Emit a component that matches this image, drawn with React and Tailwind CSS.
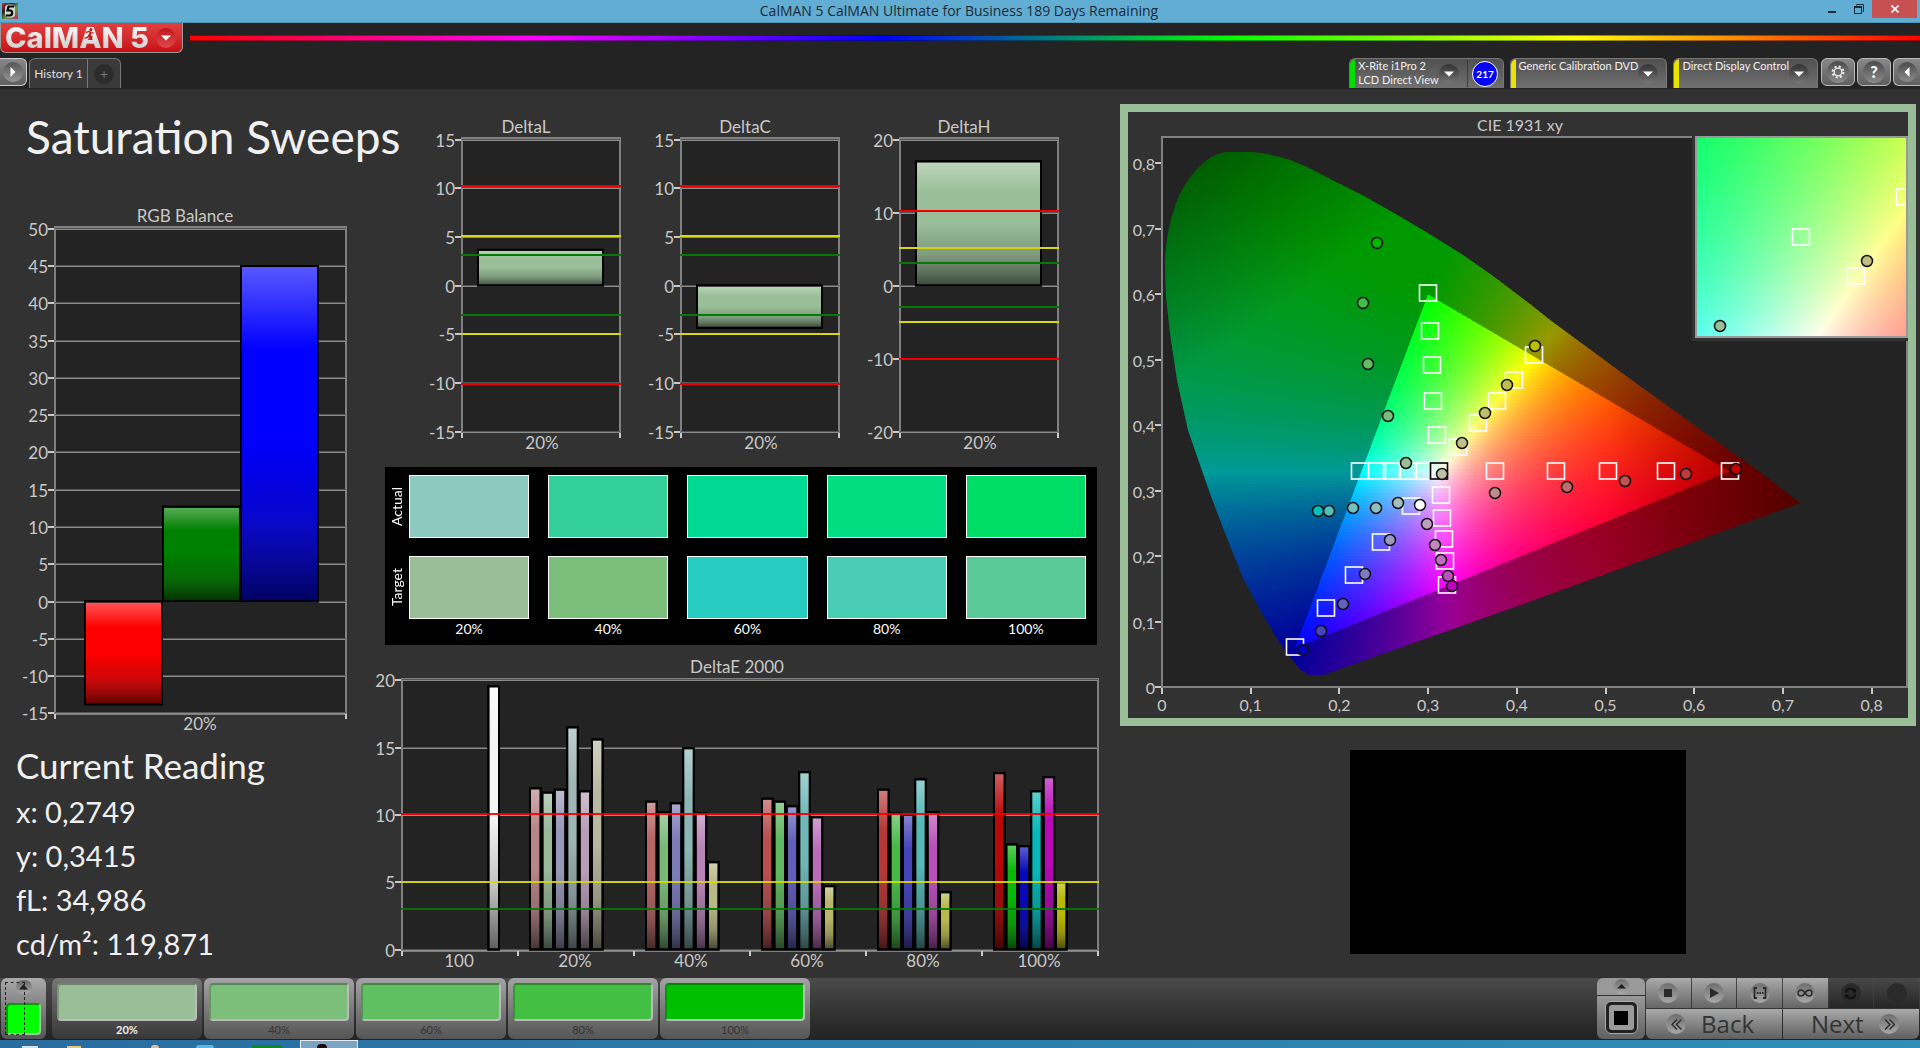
import { useState } from 'react';

// ---------- data ----------

const DELTA_CHARTS = [
  { title: 'DeltaL', max: 15, step: 5, value: 3.66 },
  { title: 'DeltaC', max: 15, step: 5, value: -4.35 },
  { title: 'DeltaH', max: 20, step: 10, value: 17 },
];

const LIMITS = [
  { value: 10, color: '#f00000' },
  { value: 5, color: '#d8d810' },
  { value: 3, color: '#067806' },
];

const DELTA_E = [
  { label: '100', bars: [null, null, null, null, null, null, [19.55, '#f4f4f4']] },
  {
    label: '20%',
    bars: [
      [11.97, '#b88686'],
      [11.65, '#98b898'],
      [11.87, '#9898b8'],
      [16.5, '#a0b6b6'],
      [11.75, '#b89eb6'],
      [15.6, '#b8b8a0'],
    ],
  },
  {
    label: '40%',
    bars: [
      [10.98, '#b86666'],
      [10.2, '#7ab87a'],
      [10.86, '#7c7cb8'],
      [14.95, '#8cb6b6'],
      [10.1, '#b884b8'],
      [6.48, '#b8b886'],
    ],
  },
  {
    label: '60%',
    bars: [
      [11.2, '#b85050'],
      [10.98, '#60b860'],
      [10.64, '#6060b8'],
      [13.17, '#70b8b8'],
      [9.82, '#b86cb8'],
      [4.7, '#b8b86c'],
    ],
  },
  {
    label: '80%',
    bars: [
      [11.87, '#b83838'],
      [10.1, '#46b846'],
      [10, '#4444b8'],
      [12.64, '#58b8b8'],
      [10.2, '#b850b8'],
      [4.25, '#b8b850'],
    ],
  },
  {
    label: '100%',
    bars: [
      [13.1, '#b80808'],
      [7.8, '#08b808'],
      [7.67, '#0808b8'],
      [11.75, '#08b8b8'],
      [12.8, '#b808b8'],
      [5, '#b8b808'],
    ],
  },
];

const SWATCHES = [
  { label: '20%', actual: 'bg-[#8ccac0]', target: 'bg-[#9abf98]' },
  { label: '40%', actual: 'bg-[#34d09c]', target: 'bg-[#7bbf7b]' },
  { label: '60%', actual: 'bg-[#00d992]', target: 'bg-[#28cbbf]' },
  { label: '80%', actual: 'bg-[#00de82]', target: 'bg-[#4acdb6]' },
  { label: '100%', actual: 'bg-[#00dd66]', target: 'bg-[#5acb98]' },
];

const READINGS = ['x: 0,2749', 'y: 0,3415', 'fL: 34,986', 'cd/m²: 119,871'];

const STEPS = [
  { label: '20%', color: 'bg-[#9abf98]' },
  { label: '40%', color: 'bg-[#7bbf7b]' },
  { label: '60%', color: 'bg-[#60bf60]' },
  { label: '80%', color: 'bg-[#43bf43]' },
  { label: '100%', color: 'bg-[#00bf00]' },
];

const TARGETS = [
  [1428, 293], [1430, 331], [1432, 365], [1433, 401], [1437, 435],
  [1534, 355], [1514, 380], [1497, 401], [1478, 423], [1458, 447],
  [1360, 471], [1377, 471], [1392, 471], [1408, 471], [1424, 471],
  [1495, 471], [1556, 471], [1608, 471], [1666, 471], [1730, 471],
  [1411, 506], [1381, 542], [1354, 575], [1326, 608], [1295, 647],
  [1441, 495], [1442, 518], [1444, 539], [1445, 561], [1447, 585],
];

const MEASURED = [
  [1377, 243, '#00b800'], [1363, 303, '#43bf43'], [1368, 364, '#60bf60'], [1388, 416, '#7bbf7b'], [1406, 463, '#9abf98'],
  [1535, 346, '#bfbf00'], [1507, 385, '#bfbf50'], [1485, 413, '#bfbf6c'], [1462, 443, '#bfbf86'], [1442, 474, '#bfbfa4'],
  [1495, 493, '#bf8a8a'], [1567, 487, '#bf6c6c'], [1625, 481, '#bf5252'], [1686, 474, '#bf3a3a'], [1736, 469, '#bf0000'],
  [1398, 503, '#a4bfbf'], [1376, 508, '#8cbfbf'], [1353, 508, '#74bfbf'], [1329, 511, '#52bfbf'], [1318, 511, '#00bfbf'],
  [1420, 505, '#ffffff'],
  [1390, 540, '#9a9abf'], [1365, 574, '#7c7cbf'], [1343, 604, '#6060bf'], [1321, 631, '#4444bf'], [1303, 650, '#0000bf'],
  [1427, 524, '#bfa0bf'], [1435, 545, '#bf86bf'], [1441, 560, '#bf6cbf'], [1448, 576, '#bf50bf'], [1452, 586, '#bf00bf'],
];

const LOCUS =
  'M1225 152 L1252 152 Q1272 154 1290 160 L1307 167 L1330 179 L1363 195.5 L1393 212.5 L1427 232.5 L1463 255 L1493 276 L1530 304 L1550 320 L1633 381 L1701 430 L1767 477.5 L1800 503 L1530 601.5 L1323 675 L1310 675 Q1304 673 1300 669 L1290 657 L1277 638.5 L1260 610 L1243 578 L1227 538 L1210 493.5 L1188 430 L1177 380 L1170 333 L1166 297 L1165 267 Q1165 240 1172 216 Q1179 190 1192 175 Q1208 155 1225 152 Z';

// ---------- charts ----------

function BarGradient({ id }) {
  return (
    <linearGradient id={id} x1="0" y1="0" x2="0" y2="1">
      <stop offset="0" stopColor="#fff" stopOpacity="0.35" />
      <stop offset="0.25" stopColor="#fff" stopOpacity="0" />
      <stop offset="0.5" stopColor="#000" stopOpacity="0" />
      <stop offset="0.75" stopColor="#222" stopOpacity="0.22" />
      <stop offset="1" stopColor="#000" stopOpacity="0.62" />
    </linearGradient>
  );
}

function Bar({ x, y, width, height, color, gradient }) {
  return (
    <g stroke="#000" strokeWidth="2">
      <rect x={x} y={y} width={width} height={height} fill={color} />
      <rect x={x} y={y} width={width} height={height} fill={`url(#${gradient})`} />
    </g>
  );
}

function GridLine({ x1, x2, y }) {
  return (
    <g shapeRendering="crispEdges">
      <rect x={x1} y={Math.round(y) - 1} width={x2 - x1} height="1" fill="#555" />
      <rect x={x1} y={Math.round(y)} width={x2 - x1} height="1" fill="#8c8c8c" />
    </g>
  );
}

function YTick({ x, y, label }) {
  return (
    <>
      <rect x={x - 6} y={Math.round(y) - 1} width="6" height="2" fill="#c8c8c8" />
      <text x={x - 6} y={Math.round(y) + 7} textAnchor="end">
        {label}
      </text>
    </>
  );
}

function RgbBalance() {
  const unit = 7.455;
  const yFor = (v) => 601.5 - v * unit;
  const ticks = [];
  for (let v = 50; v >= -15; v -= 5) ticks.push(v);
  const bars = [
    { x: 85, value: -13.8, color: '#ff0000' },
    { x: 163, value: 12.7, color: '#008000' },
    { x: 241, value: 45, color: '#0000ff' },
  ];

  return (
    <svg viewBox="0 200 372 545" className="block w-full" fill="#c8c8c8" fontSize="17">
      <defs>
        <BarGradient id="rgb-shade" />
      </defs>
      <text x="185" y="222" textAnchor="middle">RGB Balance</text>
      <rect x="55" y="227" width="291" height="487" fill="#232323" stroke="#808080" strokeWidth="2" />
      {ticks.map((v) => (
        <g key={v}>
          <GridLine x1={55} x2={346} y={yFor(v)} />
          <YTick x={54} y={yFor(v)} label={v} />
        </g>
      ))}
      {bars.map((b) => (
        <Bar
          key={b.color}
          x={b.x}
          y={yFor(Math.max(b.value, 0))}
          width={77}
          height={Math.abs(b.value) * unit}
          color={b.color}
          gradient="rgb-shade"
        />
      ))}
      <rect x="54" y="714" width="2" height="5" />
      <rect x="345" y="714" width="2" height="5" />
      <text x="200" y="730" textAnchor="middle">20%</text>
    </svg>
  );
}

function DeltaChart({ title, max, step, value }) {
  const unit = 146 / max;
  const yFor = (v) => 285.5 - v * unit;
  const limitY = (v) => 285 - (v * 148) / max;
  const ticks = [];
  for (let v = max; v >= -max; v -= step) ticks.push(v);

  return (
    <svg viewBox="0 115 219 345" className="block min-w-0 flex-1" fill="#c8c8c8" fontSize="17">
      <defs>
        <BarGradient id={`${title}-shade`} />
      </defs>
      <text x="114" y="133" textAnchor="middle">{title}</text>
      <rect x="50" y="138" width="158" height="294" fill="#232323" stroke="#808080" strokeWidth="2" />
      {ticks.map((v) => (
        <g key={v}>
          <GridLine x1={50} x2={208} y={yFor(v)} />
          <YTick x={49} y={yFor(v)} label={v} />
        </g>
      ))}
      <Bar
        x={66}
        y={yFor(Math.max(value, 0))}
        width={125}
        height={Math.abs(value) * unit}
        color="#9abf98"
        gradient={`${title}-shade`}
      />
      {LIMITS.map((l) => (
        <g key={l.value} fill={l.color}>
          <rect x="49" y={Math.round(limitY(l.value)) - 1} width="160" height="2" />
          <rect x="49" y={Math.round(limitY(-l.value)) - 1} width="160" height="2" />
        </g>
      ))}
      <rect x="49" y="433" width="2" height="5" />
      <rect x="207" y="433" width="2" height="5" />
      <text x="130" y="449" textAnchor="middle">20%</text>
    </svg>
  );
}

function DeltaE2000() {
  const yFor = (v) => 949.5 - v * 13.46;
  const left = 402;
  const group = 116;

  return (
    <svg viewBox="372 655 740 323" className="block w-full" fill="#c8c8c8" fontSize="17">
      <defs>
        <BarGradient id="de-shade" />
      </defs>
      <text x="737" y="673" textAnchor="middle">DeltaE 2000</text>
      <rect x={left} y="679" width="696" height="272" fill="#232323" stroke="#808080" strokeWidth="2" />
      {[20, 15, 10, 5, 0].map((v) => (
        <g key={v}>
          <GridLine x1={left} x2={1098} y={yFor(v)} />
          <YTick x={401} y={yFor(v)} label={v} />
        </g>
      ))}
      {DELTA_E.map((g, i) => (
        <g key={g.label}>
          {g.bars.map(
            (bar, k) =>
              bar && (
                <Bar
                  key={bar[1]}
                  x={left + i * group + 12 + k * 12.4}
                  y={yFor(bar[0])}
                  width={10.6}
                  height={bar[0] * 13.46}
                  color={bar[1]}
                  gradient="de-shade"
                />
              )
          )}
          <text x={left + i * group + 57} y="967" textAnchor="middle">{g.label}</text>
        </g>
      ))}
      {LIMITS.map((l) => (
        <rect
          key={l.value}
          x="401"
          y={Math.round(949.5 - l.value * 13.56) - 1}
          width="698"
          height="2"
          fill={l.color}
          fillOpacity="0.9"
        />
      ))}
      {[0, 1, 2, 3, 4, 5, 6].map((i) => (
        <rect key={i} x={left + i * group - 1} y="951" width="2" height="5" />
      ))}
    </svg>
  );
}

// ---------- chromaticity diagram ----------

// Linear sRGB of a chromaticity, scaled so that the strongest channel is full.
function chromaColor(x, y, level) {
  const z = 1 - x - y;
  const rgb = [
    3.2406 * x - 1.5372 * y - 0.4986 * z,
    -0.9689 * x + 1.8758 * y + 0.0415 * z,
    0.0557 * x - 0.204 * y + 1.057 * z,
  ].map((c) => Math.max(c, 0));
  const max = Math.max(...rgb, 0.0001);
  let f = level;
  if (x > 0.5) f *= Math.max(1 - (x - 0.5) * 2.1, 0);
  if (y - x > 0.45) f *= 1 - (y - x - 0.45) * 1.27;
  return `rgb(${rgb.map((c) => Math.round((c / max) * 255 * f)).join(',')})`;
}

function ColorField({ id, left, top, right, bottom, toX, toY, level, clipPath }) {
  const rows = [];
  for (let y = top; y < bottom; y += 3) rows.push(y);
  const stops = Array.from({ length: 49 }, (_, i) => i / 48);

  return (
    <g clipPath={clipPath}>
      {rows.map((y) => (
        <g key={y}>
          <linearGradient id={`${id}-${y}`}>
            {stops.map((s) => (
              <stop
                key={s}
                offset={s}
                stopColor={chromaColor(toX(left + s * (right - left)), toY(y + 1.5), level)}
              />
            ))}
          </linearGradient>
          <rect
            x={left}
            y={y}
            width={right - left}
            height={Math.min(4, bottom - y)}
            fill={`url(#${id}-${y})`}
          />
        </g>
      ))}
    </g>
  );
}

function Target({ x, y, color = '#fff' }) {
  return <rect x={x - 8.5} y={y - 8} width="17" height="16" fill="none" stroke={color} strokeWidth="1.6" />;
}

function Dot({ x, y, color }) {
  return <circle cx={x} cy={y} r="5.5" fill={color} stroke="#111" strokeWidth="1.5" />;
}

function CieDiagram() {
  const toX = (px) => (px - 1162) / 887;
  const toY = (py) => (687.5 - py) / 655;

  return (
    <svg viewBox="1128 112 780 606" className="block w-full" fill="#c8c8c8" fontSize="16">
      <defs>
        <clipPath id="locus">
          <path d={LOCUS} />
        </clipPath>
        <clipPath id="gamut">
          <path d="M1729.5 471.3 L1428 294.5 L1295 648 Z" />
        </clipPath>
        <clipPath id="inset">
          <rect x="1696" y="137" width="212" height="201" />
        </clipPath>
      </defs>
      <text x="1520" y="131" textAnchor="middle">CIE 1931 xy</text>
      <rect x="1162" y="137" width="745" height="550" fill="#232323" stroke="#808080" strokeWidth="2" />

      <ColorField id="outer" left={1164} top={151} right={1802} bottom={676} toX={toX} toY={toY} level={0.6} clipPath="url(#locus)" />
      <ColorField id="inner" left={1290} top={292} right={1732} bottom={650} toX={toX} toY={toY} level={1} clipPath="url(#gamut)" />

      {TARGETS.map(([x, y]) => (
        <Target key={`${x}-${y}`} x={x} y={y} />
      ))}
      <Target x={1439} y={471} color="#000" />
      {MEASURED.map(([x, y, color]) => (
        <Dot key={`${x}-${y}`} x={x} y={y} color={color} />
      ))}

      {/* zoomed inset */}
      <rect x="1692" y="135" width="216" height="206" fill="#323232" />
      <ColorField
        id="zoom"
        left={1696}
        top={137}
        right={1907}
        bottom={337}
        toX={(px) => 0.2749 + (px - 1720) / 2316}
        toY={(py) => 0.3415 - (py - 326) / 2023}
        level={1}
      />
      <g clipPath="url(#inset)">
        <Target x={1801} y={237} />
        <Target x={1856} y={276} />
        <Target x={1905} y={197} />
        <Dot x={1867} y={261} color="#bfbf86" />
        <Dot x={1720} y={326} color="#9abf98" />
      </g>
      <rect x="1696" y="137" width="211" height="200" fill="none" stroke="#999" strokeWidth="2" />

      {[0, 1, 2, 3, 4, 5, 6, 7, 8].map((n) => (
        <g key={n}>
          <rect x={1161 + Math.round(n * 88.7)} y="688" width="2" height="6" />
          <text x={1162 + n * 88.7} y="711" textAnchor="middle">{n ? `0,${n}` : '0'}</text>
          <YTick x={1161} y={687 - n * 65.5} label={n ? `0,${n}` : '0'} />
        </g>
      ))}
    </svg>
  );
}

// ---------- chrome ----------

function ArrowDown({ className = 'bg-gradient-to-b from-[#333] to-[#777]' }) {
  return (
    <span className={`flex size-5 shrink-0 items-center justify-center rounded-full ${className}`}>
      <svg viewBox="0 0 10 6" className="w-[10px]" fill="#fff">
        <path d="M0 0.5 H10 L5 5.5 Z" />
      </svg>
    </span>
  );
}

function DeviceTab({ stripe, lines, children }) {
  return (
    <div className="flex h-[30px] rounded-t-md border-x border-t border-[#777] bg-gradient-to-b from-[#505050] to-[#707070]">
      <button type="button" className="flex items-center overflow-hidden rounded-tl-md pr-2 text-left text-[11px] leading-[14px] text-[#f0f0f0]">
        <span className={`h-full w-[5px] shrink-0 ${stripe}`} />
        <span className="h-full flex-1 pl-[3px] whitespace-nowrap">
          {lines.map((l) => (
            <span key={l} className="block">{l}</span>
          ))}
        </span>
        <ArrowDown />
      </button>
      {children}
    </div>
  );
}

function RoundIcon({ children, dark }) {
  return (
    <span
      className={`flex size-5 items-center justify-center rounded-full ${
        dark ? 'bg-[#2a2a2a]' : 'bg-gradient-to-b from-[#6e6e6e] to-[#a8a8a8]'
      }`}
    >
      {children}
    </span>
  );
}

function ToolButton({ label, children }) {
  return (
    <button
      type="button"
      aria-label={label}
      className="flex h-7 w-[34px] items-center justify-center rounded-md border border-[#bbb] bg-gradient-to-b from-[#888] to-[#606060]"
    >
      <span className="flex size-[22px] items-center justify-center rounded-full bg-gradient-to-b from-[#4c4c4c] to-[#8c8c8c]">
        {children}
      </span>
    </button>
  );
}

function TitleBar() {
  return (
    <div className="relative flex h-[23px] shrink-0 items-start border-b border-[#4f93b5] bg-[#61add4] pr-5">
      <svg viewBox="0 0 16 16" className="mt-[3px] ml-[2px] size-4">
        <defs>
          <linearGradient id="app-icon" x1="0" y1="0" x2="1" y2="1">
            <stop offset="0" stopColor="#d03030" />
            <stop offset="0.3" stopColor="#302020" />
            <stop offset="0.6" stopColor="#60a050" />
            <stop offset="1" stopColor="#d02050" />
          </linearGradient>
        </defs>
        <rect width="16" height="16" fill="url(#app-icon)" />
        <rect x="3" y="1.5" width="10" height="13" rx="4" fill="#ccd8cc" />
        <path d="M12 3.5 H6.5 L5.5 7.5 H8 C11 7.5 11 12.5 7.5 12.5 H4" fill="none" stroke="#000" strokeWidth="2.2" />
      </svg>
      <p className="flex-1 text-center font-['Open_Sans',sans-serif] text-[14px] leading-[22px] text-[#1c2a33]">
        CalMAN 5 CalMAN Ultimate for Business 189 Days Remaining
      </p>
      <div className="absolute top-0 right-[3px] flex h-[18px] items-center">
        <button type="button" aria-label="Minimize" className="flex w-[26px] justify-center pt-[6px]">
          <span className="h-[2px] w-2 bg-[#1c2a33]" />
        </button>
        <button type="button" aria-label="Restore" className="flex w-[27px] justify-center">
          <svg viewBox="0 0 10 10" className="size-[10px]" fill="none" stroke="#1c2a33">
            <path d="M2.5 1.5 V0.5 H9.5 V7.5 H8.5" />
            <rect x="0.5" y="2.5" width="7" height="7" />
            <path d="M0 3.5 H8" />
          </svg>
        </button>
        <button type="button" aria-label="Close" className="flex h-[18px] w-[45px] items-center justify-center bg-[#c75050]">
          <svg viewBox="0 0 8 8" className="size-2" stroke="#fff" strokeWidth="1.7">
            <path d="M0.5 0.5 L7.5 7.5 M7.5 0.5 L0.5 7.5" />
          </svg>
        </button>
      </div>
    </div>
  );
}

function Header() {
  return (
    <header className="h-[66px] shrink-0 bg-[#232323]">
      <div className="flex h-[35px] items-start">
        <button
          type="button"
          className="relative flex h-[30px] w-[183px] items-center justify-between rounded-b-md border-x border-b border-[#999] bg-gradient-to-b from-[#e04040] to-[#c80c10] pr-[6px] pl-1"
        >
          <span className="bg-gradient-to-b from-white to-[#c8c8c8] bg-clip-text font-['Inter',sans-serif] text-[29px] leading-[28px] font-extrabold whitespace-nowrap text-transparent">
            CalMAN 5
          </span>
          <ArrowDown className="bg-gradient-to-b from-[#c01020] to-[#e04848]" />
          {/* runner over the A */}
          <svg viewBox="0 0 12 14" className="absolute top-[5px] left-[83px] w-[11px]" fill="none" stroke="#c01418" strokeWidth="1.4">
            <circle cx="7.5" cy="1.8" r="1" fill="#c01418" />
            <path d="M2 5 L5 3.8 L7.500 5 L10.500 5.500 M7 5 L5 8.500 L8.500 9.500 L7.500 13 M5 8.500 L3.500 10.500 L0.500 11" />
          </svg>
        </button>
        <div className="mt-3 ml-[7px] h-[6px] flex-1 border-y border-black/40 bg-[linear-gradient(to_right,#ff0000,#ff00ff_20%,#0000ff_40%,#00ff00_60%,#ffff00_80%,#ff0000)]" />
      </div>
      <div className="flex items-start justify-between">
        <div className="flex items-start">
          <button
            type="button"
            aria-label="Show sidebar"
            className="flex h-[28px] w-[27px] items-center justify-center rounded-r-md border-y border-r border-[#ccc] bg-gradient-to-b from-[#888] to-[#606060]"
          >
            <span className="flex size-5 items-center justify-center rounded-full bg-gradient-to-b from-[#555] to-[#999]">
              <svg viewBox="0 0 6 10" className="h-[10px]" fill="#fff">
                <path d="M0.5 0 L5.5 5 L0.5 10 Z" />
              </svg>
            </span>
          </button>
          <div className="ml-[2px] flex h-[30px] rounded-t-md border-x border-t border-[#777] bg-[#3a3a3a]">
            <button type="button" className="w-[58px] border-r border-[#777] text-[12px] text-[#e0e0e0]">
              History 1
            </button>
            <button type="button" aria-label="Add history" className="flex w-8 items-center justify-center">
              <span className="size-5 rounded-full bg-[#2c2c2c] text-center text-[14px] leading-5 text-[#777]">+</span>
            </button>
          </div>
        </div>
        <div className="flex items-start gap-[6px]">
          <DeviceTab stripe="bg-[#00e000]" lines={['X-Rite i1Pro 2', 'LCD Direct View']}>
            <span className="my-px flex w-9 items-center justify-center border-l border-[#3a3a3a]">
              <span className="size-[26px] rounded-full border border-white bg-[#0000ff] text-center text-[10px] leading-6 font-bold text-white">
                217
              </span>
            </span>
          </DeviceTab>
          <DeviceTab stripe="bg-[#e8e400]" lines={['Generic Calibration DVD']} />
          <DeviceTab stripe="bg-[#e8e400]" lines={['Direct Display Control']} />
          <div className="-ml-[3px] flex gap-[2px] overflow-hidden">
            <ToolButton label="Settings">
              <svg viewBox="0 0 16 16" className="size-[14px]" fill="none" stroke="#eee">
                <circle cx="8" cy="8" r="4.4" strokeWidth="1.6" />
                <circle cx="8" cy="8" r="6.3" strokeWidth="2.2" strokeDasharray="2.5 2.45" />
              </svg>
            </ToolButton>
            <ToolButton label="Help">
              <span className="text-[16px] leading-5 font-black text-white">?</span>
            </ToolButton>
            <button
              type="button"
              aria-label="Show panel"
              className="flex h-7 w-[27px] items-center justify-center rounded-l-md border-y border-l border-[#bbb] bg-gradient-to-b from-[#888] to-[#606060]"
            >
              <span className="flex size-5 items-center justify-center rounded-full bg-gradient-to-b from-[#4c4c4c] to-[#8c8c8c]">
                <svg viewBox="0 0 6 10" className="h-[10px]" fill="#fff">
                  <path d="M5.5 0 L0.5 5 L5.5 10 Z" />
                </svg>
              </span>
            </button>
          </div>
        </div>
      </div>
    </header>
  );
}

function SwatchRow({ title, field }) {
  return (
    <div className="flex">
      <div className="flex w-6 shrink-0 items-center justify-center">
        <span className="rotate-180 text-[14px] leading-4 [writing-mode:vertical-rl]">{title}</span>
      </div>
      <div className="grid flex-1 grid-cols-5 gap-[19px]">
        {SWATCHES.map((s) => (
          <div key={s.label} className={`h-[63px] border border-white ${s[field]}`} />
        ))}
      </div>
    </div>
  );
}

function SwatchPanel() {
  return (
    <div className="mr-[15px] ml-[13px] bg-black pt-2 pr-[11px] pb-[6px] text-white">
      <SwatchRow title="Actual" field="actual" />
      <div className="h-[18px]" />
      <SwatchRow title="Target" field="target" />
      <div className="grid grid-cols-5 gap-[19px] pl-6 text-center text-[14px] leading-5">
        {SWATCHES.map((s) => (
          <span key={s.label}>{s.label}</span>
        ))}
      </div>
    </div>
  );
}

function StepButton({ step, selected, onSelect }) {
  return (
    <button
      type="button"
      onClick={onSelect}
      className={`h-[61px] w-[150px] rounded-md px-[5px] pt-1 text-[11px] ${
        selected
          ? 'bg-gradient-to-b from-[#777] to-[#383838] font-bold text-[#eee]'
          : 'bg-gradient-to-b from-[#a4a4a4] to-[#555] text-[#333]'
      }`}
    >
      <span className={`block h-[38px] rounded-[4px] border-2 border-t-black/30 border-r-[#bbb] border-b-[#bbb] border-l-black/20 ${step.color}`} />
      <span className="block pt-px leading-4">{step.label}</span>
    </button>
  );
}

function MeterButton({ label, dark, className = '', children }) {
  return (
    <button
      type="button"
      aria-label={label}
      className={`flex h-[30px] items-center justify-center ${
        dark ? 'bg-gradient-to-b from-[#484848] to-[#262626]' : 'bg-gradient-to-b from-[#aaa] to-[#666]'
      } ${className}`}
    >
      <RoundIcon dark={dark}>{children}</RoundIcon>
    </button>
  );
}

function Footer() {
  const [selected, setSelected] = useState('20%');

  return (
    <footer className="flex h-[62px] shrink-0 items-start justify-between bg-gradient-to-b from-[#4a4a4a] to-[#222]">
      <div className="flex gap-[2px] pl-px">
        <button
          type="button"
          aria-label="Target level"
          className="relative mr-1 flex h-[61px] w-[45px] flex-col items-center justify-between rounded-md bg-gradient-to-b from-[#aaa] to-[#555] px-[5px] pt-[2px] pb-1"
        >
          <span className="flex h-[14px] w-4 items-center justify-center rounded-full bg-gradient-to-b from-[#666] to-[#aaa]">
            <svg viewBox="0 0 10 6" className="w-[9px]" fill="#222">
              <path d="M5 0 L10 6 H0 Z" />
            </svg>
          </span>
          <span className="h-8 w-full rounded-[4px] border-2 border-t-[#0a9a0a] border-r-[#9c9] border-b-[#9c9] border-l-[#0a9a0a] bg-[#00ff00]" />
          <span className="absolute top-1 bottom-1 left-1 w-5 border border-dashed border-[#222]" />
        </button>
        {STEPS.map((s) => (
          <StepButton key={s.label} step={s} selected={s.label === selected} onSelect={() => setSelected(s.label)} />
        ))}
      </div>

      <div className="flex gap-px pr-px">
        <div className="flex w-12 flex-col overflow-hidden rounded-md">
          <button type="button" aria-label="Expand" className="flex h-[18px] items-center justify-center border-b border-[#333] bg-[#999]">
            <span className="flex size-[15px] items-center justify-center rounded-full bg-gradient-to-b from-[#6e6e6e] to-[#a8a8a8]">
              <svg viewBox="0 0 10 6" className="w-[9px]" fill="#222">
                <path d="M5 0 L10 5 H0 Z" />
              </svg>
            </span>
          </button>
          <button type="button" aria-label="Pattern window" className="flex h-[43px] items-center justify-center bg-gradient-to-b from-[#999] to-[#606060]">
            <span className="flex size-[33px] items-center justify-center rounded-md border border-[#aaa] bg-[#222] p-[3px]">
              <span className="flex size-full items-center justify-center rounded-[3px] bg-[#9a9a9a]">
                <span className="size-[14px] bg-black" />
              </span>
            </span>
          </button>
        </div>
        <div className="grid w-[273px] grid-cols-6 gap-px">
          <MeterButton label="Stop" className="rounded-tl-md">
            <span className="size-2 bg-[#2a2a2a]" />
          </MeterButton>
          <MeterButton label="Play">
            <svg viewBox="0 0 9 10" className="ml-[2px] h-[10px]" fill="#2a2a2a">
              <path d="M0 0 L9 5 L0 10 Z" />
            </svg>
          </MeterButton>
          <MeterButton label="Read series">
            <svg viewBox="0 0 14 12" className="w-[14px]" fill="none" stroke="#2a2a2a" strokeWidth="1.8">
              <path d="M4 1 H1.5 V11 H4 M10 1 H12.5 V11 H10" />
              <path d="M3.8 6 H10.5" strokeDasharray="1.6 1" strokeWidth="2" />
            </svg>
          </MeterButton>
          <MeterButton label="Read continuous">
            <svg viewBox="0 0 16 8" className="w-4 shrink-0" fill="none" stroke="#2a2a2a" strokeWidth="1.5">
              <path d="M8 4 C6.5 1.5 5.5 1 4 1 C2.2 1 1 2.4 1 4 S2.2 7 4 7 C5.5 7 6.5 6.5 8 4 C9.5 1.5 10.5 1 12 1 C13.8 1 15 2.4 15 4 S13.8 7 12 7 C10.5 7 9.5 6.5 8 4 Z" />
            </svg>
          </MeterButton>
          <MeterButton label="Refresh" dark>
            <svg viewBox="0 0 14 14" className="size-[13px]" fill="none" stroke="#111" strokeWidth="2.2">
              <path d="M2 6 A5 5 0 0 1 11 4 M12 8 A5 5 0 0 1 3 10" />
              <path d="M13 1 V6 H8 Z M1 13 V8 H6 Z" fill="#111" stroke="none" />
            </svg>
          </MeterButton>
          <MeterButton label="Record" dark className="rounded-tr-md" />
          <button
            type="button"
            className="col-span-3 flex h-[30px] items-center justify-between rounded-bl-md bg-gradient-to-b from-[#aaa] to-[#606060] pr-7 pl-5 font-['Open_Sans',sans-serif] text-[24px] leading-[30px] font-medium text-[#333]"
          >
            <RoundIcon>
              <Chevrons d="M6 0.5 L1 5.5 L6 10.5 M10.5 0.5 L5.5 5.5 L10.5 10.5" />
            </RoundIcon>
            Back
          </button>
          <button
            type="button"
            className="col-span-3 flex h-[30px] items-center justify-between rounded-br-md bg-gradient-to-b from-[#aaa] to-[#606060] pr-5 pl-7 font-['Open_Sans',sans-serif] text-[24px] leading-[30px] font-medium text-[#333]"
          >
            Next
            <RoundIcon>
              <Chevrons d="M1 0.5 L6 5.5 L1 10.5 M5.5 0.5 L10.5 5.5 L5.5 10.5" />
            </RoundIcon>
          </button>
        </div>
      </div>
    </footer>
  );
}

function Chevrons({ d }) {
  return (
    <svg viewBox="0 0 11 11" className="size-[11px]" fill="none" stroke="#2a2a2a" strokeWidth="1.4">
      <path d={d} />
    </svg>
  );
}

function Taskbar() {
  return (
    <div className="flex h-2 shrink-0 items-end overflow-hidden bg-gradient-to-r from-[#296ca0] to-[#2f8fb8] pl-[22px]">
      <span className="h-[2px] w-4 -skew-x-12 bg-white/80" />
      <span className="ml-[29px] h-[2px] w-[14px] bg-[#e6c87a]" />
      <span className="ml-[70px] h-[3px] w-2 rounded-t-full bg-[#e8b890]" />
      <span className="ml-[37px] h-[3px] w-[18px] rounded-t-full bg-[#58b8e8]" />
      <span className="ml-[38px] h-[3px] w-[30px] bg-[#0a8a20]" />
      <span className="ml-[18px] flex h-2 w-[58px] items-end border border-b-0 border-white/80 bg-[#7ba4c0] pl-4">
        <span className="h-[4px] w-[10px] rounded-t-full bg-[#200808]" />
      </span>
    </div>
  );
}

export default function App() {
  return (
    <div className="flex min-h-screen flex-col bg-[#232323] font-['Lato',sans-serif]">
      <TitleBar />
      <Header />
      <main className="grid flex-1 grid-cols-[minmax(0,372fr)_minmax(0,740fr)_minmax(0,808fr)] items-start bg-[#323232]">
        <section className="text-[#f0f0f0]">
          <h1 className="pt-[18px] pl-[26px] text-[46px] leading-[60px] whitespace-nowrap">Saturation Sweeps</h1>
          <div className="pt-[33px]">
            <RgbBalance />
          </div>
          <h2 className="pl-4 text-[35px] leading-10">Current Reading</h2>
          <ul className="pt-[5px] pl-4 text-[29px] leading-[44px]">
            {READINGS.map((r) => (
              <li key={r}>{r}</li>
            ))}
          </ul>
        </section>

        <section className="pt-[26px]">
          <div className="mr-[43px] ml-10 flex">
            {DELTA_CHARTS.map((c) => (
              <DeltaChart key={c.title} {...c} />
            ))}
          </div>
          <div className="pt-[7px] pb-[10px]">
            <SwatchPanel />
          </div>
          <DeltaE2000 />
        </section>

        <section className="pt-[15px] pr-1 pl-2">
          <div className="border-8 border-[#9abf98] bg-[#323232]">
            <CieDiagram />
          </div>
          <div className="mx-auto mt-6 h-[204px] w-[336px] bg-black" />
        </section>
      </main>
      <Footer />
      <Taskbar />
    </div>
  );
}
